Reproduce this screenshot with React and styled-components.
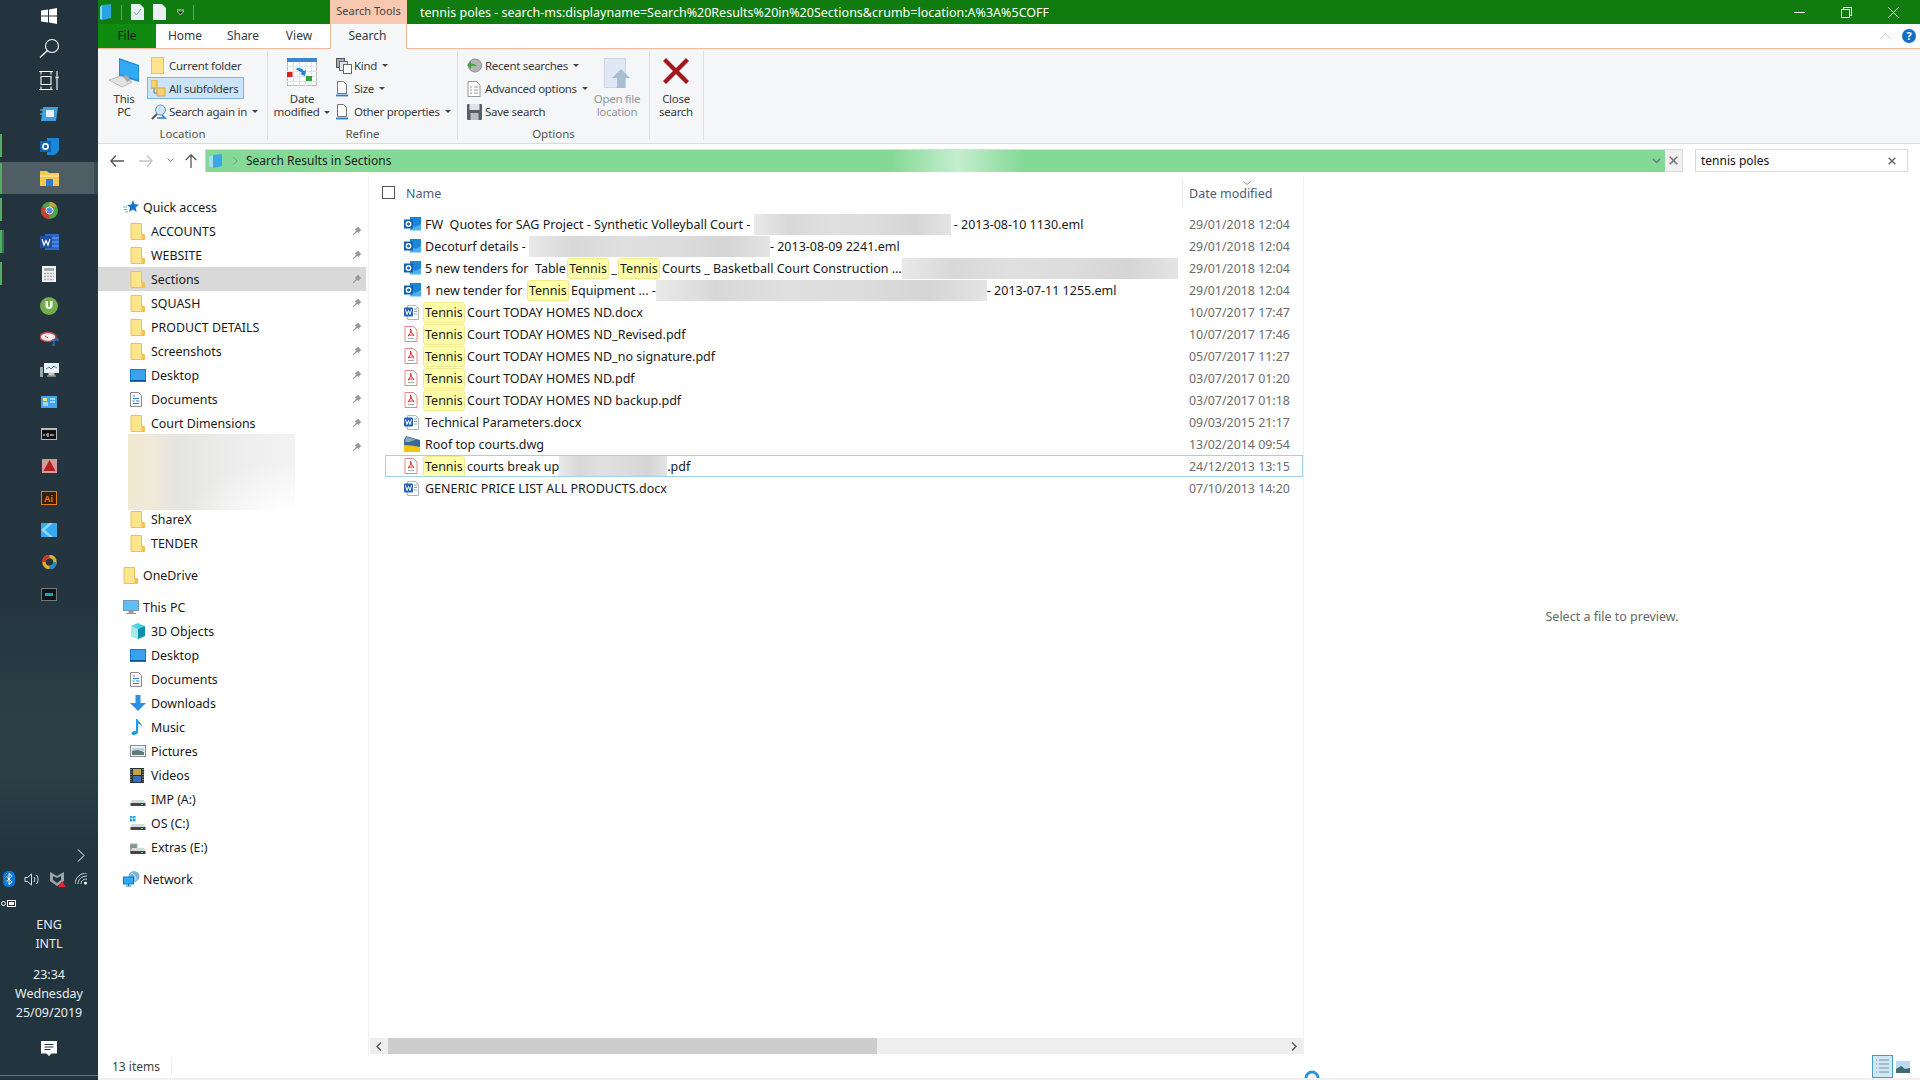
import React from "react";
import styled, { createGlobalStyle } from "styled-components";

const Global = createGlobalStyle`
  html, body { margin:0; padding:0; background:#fff; }
  body { font-family:"Noto Sans","Open Sans",sans-serif; font-size:12px; color:#1a1a1a; }
  * { box-sizing:border-box; }
  svg { display:block; flex:none; }
`;

/* ---------- small drawings ---------- */
const Folder = () => (
  <svg width="15" height="17" viewBox="0 0 15 17">
    <path d="M1 .5h10.5v11l3 .5v4.500H1z" fill="#fde58f" stroke="#ecc25c" />
    <path d="M11.500 11h3v5.500h-3z" fill="#f2c14e" />
  </svg>
);
const DesktopIcon = () => (
  <svg width="16" height="13" viewBox="0 0 16 13">
    <rect width="16" height="13" fill="#1479d6" />
    <path d="M1 1h14v10L1 11z" fill="#3aa0f0" />
    <path d="M0 11.500h16" stroke="#0a4f91" />
  </svg>
);
const DocsIcon = () => (
  <svg width="12" height="15" viewBox="0 0 12 15">
    <path d="M.5.5h8l3 3v11H.5z" fill="#fff" stroke="#8a8a8a" />
    <path d="M3 4h2M3 6.500h6M6 9h3.500M2.500 9h2M3 11.500h6" stroke="#2c7fd1" />
  </svg>
);
const Pin = () => (
  <svg width="10" height="10" viewBox="0 0 10 10">
    <path d="M5.800.6l3.600 3.600-1.200.6-1.500 2.300L5 6 1.200 9.400 0.600 8.800 4 5 2.900 3.300l2.300-1.500z" fill="#9a9a9a" />
  </svg>
);
const QuickStar = () => (
  <svg width="16" height="14" viewBox="0 0 16 14">
    <path d="M10 0l1.600 4.300 4.400.3-3.400 2.800 1.100 4.500L9.900 9.500 6 12l1.100-4.400L4 5l4.300-.4z" fill="#1872c9" />
    <path d="M0 7h4M1 9.500h3.500M2 12h3" stroke="#6aaee6" />
  </svg>
);
const PcIcon = () => (
  <svg width="16" height="15" viewBox="0 0 16 15">
    <rect x=".5" y=".5" width="15" height="10" fill="#5cc0f5" stroke="#7a99ad" />
    <path d="M6 11h4v2H6zM3 13.500h10" fill="#9ab" stroke="#8b9aa6" />
  </svg>
);
const CubeIcon = () => (
  <svg width="16" height="16" viewBox="0 0 16 16">
    <path d="M8 0l7 3v10l-7 3-7-3V3z" fill="#4ed3dc" />
    <path d="M8 6l7-3v10l-7 3z" fill="#0f8fb0" />
    <path d="M1 3l7 3v10l-7-3z" fill="#a6ebe9" />
  </svg>
);
const DownloadIcon = () => (
  <svg width="16" height="16" viewBox="0 0 16 16"><path d="M5.500 0h5v8H16l-8 8-8-8h5.500z" fill="#2f8fe0" /></svg>
);
const MusicIcon = () => (
  <svg width="13" height="16" viewBox="0 0 13 16"><path d="M6 0h1.500c.5 3 5 4 4.500 8-.6-2-2.500-3-3.800-3.300L8 13c0 2-2 3-4.500 3C1.500 16 1 14.500 2 13.300c1-1.200 3-1.500 4-1z" fill="#1e9be8" /></svg>
);
const PicturesIcon = () => (
  <svg width="16" height="12" viewBox="0 0 16 12">
    <rect x=".5" y=".5" width="15" height="11" fill="#eef3f6" stroke="#8a8f92" />
    <path d="M2 3h12v3H2z" fill="#bcd3e4" /><path d="M2 6l6-1 6 2v3H2z" fill="#5d7a78" />
  </svg>
);
const VideosIcon = () => (
  <svg width="14" height="15" viewBox="0 0 14 15">
    <rect width="14" height="15" fill="#2b2f38" />
    <rect x="3" y="1" width="8" height="6" fill="#c8a53c" /><rect x="3" y="8" width="8" height="6" fill="#3a6fb5" />
    <path d="M1 1v13M13 1v13" stroke="#ddd" strokeDasharray="1 1.500" />
  </svg>
);
const Drive = ({ kind }) => (
  <svg width="16" height="15" viewBox="0 0 16 15">
    {kind === "os" && <path d="M0 0h2.500v2.500H0zM3 0h2.500v2.500H3zM0 3h2.500v2.500H0zM3 3h2.500v2.500H3z" fill="#26a8e0" />}
    {kind === "ex" && <rect y="4" width="7" height="9" fill="#7d9a84" stroke="#aaa" />}
    <path d="M2 8h12l1.500 3h-15z" fill="#d8d8d8" />
    <rect x=".5" y="11" width="15" height="3" fill="#444" />
    <rect x="11" y="12" width="2" height="1" fill="#5fd35f" />
  </svg>
);
const NetworkIcon = () => (
  <svg width="17" height="16" viewBox="0 0 17 16">
    <circle cx="11" cy="5.500" r="5.500" fill="#7cb2de" /><path d="M8 2c3 1 5 3 5 8" stroke="#dfeefa" fill="none" />
    <rect x=".5" y="6" width="10" height="7" fill="#35a7ef" stroke="#1774b8" />
    <path d="M3 15h5M5.500 13v2" stroke="#1774b8" />
  </svg>
);

const OutlookSmall = () => (
  <svg width="17" height="15" viewBox="0 0 17 15">
    <path d="M6 0h11v7l-3 6H6z" fill="#1b86d6" />
    <path d="M6 7l5.500 3L17 7v6.500H6z" fill="#4fb0ea" />
    <rect x="0" y="2.500" width="9" height="9" fill="#0f62ad" />
    <circle cx="4.500" cy="7" r="2.200" fill="none" stroke="#fff" strokeWidth="1.400" />
  </svg>
);
const WordSmall = () => (
  <svg width="15" height="15" viewBox="0 0 15 15">
    <path d="M3.500.5h8l3 3v11h-11z" fill="#fff" stroke="#b5b5b5" />
    <path d="M10 4h3M10 6.500h3M10 9h3" stroke="#7fa8d6" />
    <rect y="2.500" width="9" height="9" rx="1" fill="#2d61b5" />
    <path d="M1.500 4.500l1.500 5 1.500-4 1.500 4 1.500-5" stroke="#fff" fill="none" />
  </svg>
);
const PdfSmall = () => (
  <svg width="14" height="16" viewBox="0 0 14 16">
    <path d="M1 .5h8.500l3.500 3.500v11.500H1z" fill="#fff" stroke="#e08a8a" />
    <path d="M6.500 3c1 2 0 4-2.500 7 2-1 4.500-1.500 6-.6C8.500 8.500 7 6 6.500 3z" fill="none" stroke="#d9252a" />
    <path d="M4 12.500h6" stroke="#aaa" />
  </svg>
);
const DwgSmall = () => (
  <svg width="16" height="16" viewBox="0 0 16 16">
    <path d="M2 0l14 4v8H0V4z" fill="#3b6a98" /><path d="M2 1L12 3.500 5 6H1z" fill="#93a7b8" />
    <path d="M0 9l7 .5 9 1.500v5H0z" fill="#f2c511" />
  </svg>
);

const RibbonFolder = () => (
  <svg width="13" height="17" viewBox="0 0 13 17"><rect x=".5" y=".5" width="12" height="16" fill="#fde48c" stroke="#e9c25e" /></svg>
);
const SubFolders = () => (
  <svg width="15" height="17" viewBox="0 0 15 17">
    <path d="M0 0h6v8H0z" fill="#f7d36f" stroke="#d7a93c" />
    <path d="M6 8h8v8H6z" fill="#f7d36f" stroke="#d7a93c" />
    <path d="M3 8v5h3" stroke="#777" fill="none" />
  </svg>
);
const SearchAgain = () => (
  <svg width="16" height="16" viewBox="0 0 16 16">
    <circle cx="9.500" cy="6" r="5" fill="#cfe6f8" stroke="#6f8ea6" />
    <path d="M6 10l-5 5" stroke="#555" strokeWidth="2" /><path d="M6 14h8l-3-3" stroke="#2a7fd0" fill="none" strokeWidth="1.500" />
  </svg>
);
const ThisPcBig = () => (
  <svg width="31" height="30" viewBox="0 0 31 30">
    <path d="M10 0l20 7v17L10 18z" fill="#1f8fdc" /><path d="M11 2l18 6v14L11 16z" fill="#31aaf2" />
    <path d="M0 22l12-4 11 6-10 5z" fill="#e3e3e3" stroke="#bbb" /><path d="M14 18l4-1 4 5-4 2z" fill="#a8a8a8" />
  </svg>
);
const DateBig = () => (
  <svg width="30" height="28" viewBox="0 0 30 28">
    <rect x=".5" y=".5" width="29" height="27" fill="#fff" stroke="#bbb" />
    <rect width="30" height="4" fill="#3a86d1" />
    <path d="M0 8.500h30M0 13.500h30M0 18.500h30M0 23.500h30M6.500 4v24M12.500 4v24M18.500 4v24M24.500 4v24" stroke="#d7e3ee" />
    <rect y="14" width="5.500" height="5" fill="#e02020" /><rect x="19" y="18" width="6" height="5" fill="#2aa63a" />
    <path d="M8 11c4-2 7-1 9 2l2-1-1 6-5-2 2-1c-2-2-4-3-7-4z" fill="#2a7fd0" />
  </svg>
);
const KindIcon = () => (
  <svg width="16" height="16" viewBox="0 0 16 16">
    <rect x=".5" y=".5" width="8" height="9" fill="#aaa" stroke="#555" />
    <rect x="3.500" y="3.500" width="8" height="9" fill="#d7e4f2" stroke="#667" />
    <rect x="7.500" y="6.500" width="8" height="9" fill="#fff" stroke="#666" />
  </svg>
);
const PageBar = () => (
  <svg width="12" height="16" viewBox="0 0 12 16">
    <path d="M1.500.5h6l3 3v9h-9z" fill="#fff" stroke="#777" />
    <path d="M0 14.500h12" stroke="#2a7fd0" strokeWidth="1.800" />
  </svg>
);
const RecentIcon = () => (
  <svg width="15" height="15" viewBox="0 0 15 15">
    <circle cx="8" cy="7.500" r="6.500" fill="#b5b5b5" stroke="#8a8a8a" />
    <path d="M0 7l4-4v2.500c3 0 5 1 6 3-2-1-4-1-6-.5V11z" fill="#43a047" />
  </svg>
);
const AdvancedIcon = () => (
  <svg width="14" height="16" viewBox="0 0 14 16">
    <path d="M1 .5h8.500l3.500 3.500v11.500H1z" fill="#fff" stroke="#999" />
    <path d="M3 6h2M3 9h2M3 12h2M7 6h4M7 9h4M7 12h4" stroke="#999" />
  </svg>
);
const SaveIcon = () => (
  <svg width="15" height="16" viewBox="0 0 15 16">
    <rect width="15" height="16" rx="1" fill="#5a5f66" />
    <rect x="2.500" y="0" width="10" height="6" fill="#dfe3e8" />
    <rect x="3.500" y="9" width="8" height="7" fill="#b9bdc2" />
  </svg>
);
const OpenLocation = () => (
  <svg width="27" height="31" viewBox="0 0 27 31">
    <rect x=".5" y=".5" width="21" height="29" fill="#dfe8f4" stroke="#cbd7e6" />
    <path d="M17 11l9 9h-5v10h-8V20H8z" fill="#a9bdd3" />
  </svg>
);
const CloseBig = () => (
  <svg width="26" height="26" viewBox="0 0 26 26">
    <path d="M3 0l10 10L23 0l3 3-10 10 10 10-3 3-10-10L3 26l-3-3 10-10L0 3z" fill="#a4161f" />
  </svg>
);

const Tri = styled.span`
  display:inline-block;
  width:0;
  height:0;
  margin-left:5px;
  border-left:3px solid transparent;
  border-right:3px solid transparent;
  border-top:3px solid #444;
  vertical-align:2px;
`;

/* ---------- data ---------- */
const M = { mark: true };
const files = [
  { icon: "ol", date: "29/01/2018 12:04", name: ["FW  Quotes for SAG Project - Synthetic Volleyball Court - ", { blur: 197 }, " - 2013-08-10 1130.eml"] },
  { icon: "ol", date: "29/01/2018 12:04", name: ["Decoturf details - ", { blur: 241 }, "- 2013-08-09 2241.eml"] },
  { icon: "ol", date: "29/01/2018 12:04", name: ["5 new tenders for  Table ", M, " _ ", M, " Courts _ Basketball Court Construction ...", { blur: 276 }] },
  { icon: "ol", date: "29/01/2018 12:04", name: ["1 new tender for  ", M, " Equipment ... -", { blur: 331 }, "- 2013-07-11 1255.eml"] },
  { icon: "w", date: "10/07/2017 17:47", name: [M, " Court TODAY HOMES ND.docx"] },
  { icon: "p", date: "10/07/2017 17:46", name: [M, " Court TODAY HOMES ND_Revised.pdf"] },
  { icon: "p", date: "05/07/2017 11:27", name: [M, " Court TODAY HOMES ND_no signature.pdf"] },
  { icon: "p", date: "03/07/2017 01:20", name: [M, " Court TODAY HOMES ND.pdf"] },
  { icon: "p", date: "03/07/2017 01:18", name: [M, " Court TODAY HOMES ND backup.pdf"] },
  { icon: "w", date: "09/03/2015 21:17", name: ["Technical Parameters.docx"] },
  { icon: "d", date: "13/02/2014 09:54", name: ["Roof top courts.dwg"] },
  { icon: "p", date: "24/12/2013 13:15", focus: true, name: [M, " courts break up", { blur: 108 }, ".pdf"] },
  { icon: "w", date: "07/10/2013 14:20", name: ["GENERIC PRICE LIST ALL PRODUCTS.docx"] },
];
const fileIcons = { ol: <OutlookSmall />, w: <WordSmall />, p: <PdfSmall />, d: <DwgSmall /> };

const quick = [
  ["ACCOUNTS", <Folder />], ["WEBSITE", <Folder />], ["Sections", <Folder />, true], ["SQUASH", <Folder />],
  ["PRODUCT DETAILS", <Folder />], ["Screenshots", <Folder />], ["Desktop", <DesktopIcon />],
  ["Documents", <DocsIcon />], ["Court Dimensions", <Folder />],
];
const pcItems = [
  ["3D Objects", <CubeIcon />], ["Desktop", <DesktopIcon />], ["Documents", <DocsIcon />], ["Downloads", <DownloadIcon />],
  ["Music", <MusicIcon />], ["Pictures", <PicturesIcon />], ["Videos", <VideosIcon />],
  ["IMP (A:)", <Drive />], ["OS (C:)", <Drive kind="os" />], ["Extras (E:)", <Drive kind="ex" />],
];

const taskIcons = [
  { el: <svg width="18" height="16" viewBox="0 0 18 16"><path d="M3 1h15l-2 14H1z" fill="#3f9fe0" /><rect x="6" y="4" width="8" height="7" fill="#e6f2fb" /><path d="M0 4h3M0 8h2" stroke="#7cc" /></svg> },
  { on: true, el: <svg width="19" height="17" viewBox="0 0 19 17"><path d="M7 0h12v13l-4 4H7z" fill="#1b86d6" /><rect y="3" width="11" height="11" fill="#0f62ad" /><circle cx="5.500" cy="8.500" r="2.600" fill="none" stroke="#fff" strokeWidth="1.600" /></svg> },
  { on: true, active: true, el: <svg width="19" height="16" viewBox="0 0 19 16"><path d="M0 1h7l2 2h10v13H0z" fill="#f5c94f" /><path d="M0 5h19v2H0z" fill="#fbe08a" /><rect x="6" y="9" width="7" height="7" fill="#2d7fc8" /></svg> },
  { on: true, el: <svg width="17" height="17" viewBox="0 0 17 17"><circle cx="8.500" cy="8.500" r="8.500" fill="#4da64d" /><path d="M8.500 0a8.500 8.500 0 0 1 7.500 4.500H8.500z" fill="#d9a12c" /><path d="M1.500 4a8.500 8.500 0 0 0 6 13l3-6z" fill="#c9412f" /><circle cx="8.500" cy="8.500" r="3.600" fill="#5a8fe0" stroke="#eee" /></svg> },
  { on: true, dbl: true, el: <svg width="19" height="16" viewBox="0 0 19 16"><rect x="5" width="14" height="16" fill="#2b69c8" /><path d="M11 4h8M11 8h8M11 12h8" stroke="#74a3e6" /><rect y="2" width="12" height="12" fill="#1b4ea0" /><path d="M2 5l2 6 2-4.500L8 11l2-6" stroke="#fff" strokeWidth="1.200" fill="none" /></svg> },
  { on: true, el: <svg width="14" height="16" viewBox="0 0 14 16"><rect width="14" height="16" fill="#f2f2f2" /><rect x="2" y="2" width="10" height="3" fill="#aaa" /><path d="M2 7.500h10M2 10.500h10M2 13.500h10" stroke="#aaa" strokeDasharray="2 1" strokeWidth="1.500" /></svg> },
  { el: <svg width="18" height="18" viewBox="0 0 18 18"><circle cx="9" cy="9" r="9" fill="#73ad4c" /><path d="M5.500 4v5c0 4 7 4 7 0V4h-2.500v5c0 1-2 1-2 0V4z" fill="#fff" /></svg> },
  { el: <svg width="19" height="15" viewBox="0 0 19 15"><ellipse cx="8" cy="6" rx="8" ry="4.500" fill="#eee" stroke="#c0444a" strokeWidth="1.500" /><path d="M5 5l3 2" stroke="#c0444a" /><path d="M12 9h6l-1-2M14 9v5h-2" stroke="#2a72b5" strokeWidth="1.500" fill="none" /></svg> },
  { el: <svg width="19" height="15" viewBox="0 0 19 15"><rect x="4" width="15" height="10" fill="#eef2f5" /><path d="M6 6l3-2 2 2 3-3 3 2" stroke="#3a86d1" fill="none" /><path d="M9 10h5v2H9zM7 13h9" stroke="#ccc" fill="#bbb" /><rect y="4" width="3" height="10" fill="#9aa" /></svg> },
  { el: <svg width="16" height="12" viewBox="0 0 16 12"><rect width="16" height="12" fill="#42a5e8" /><rect x="2" y="2" width="4" height="3" fill="#f2e08a" /><path d="M2 7h5M2 9h5M9 3h5M9 6h5" stroke="#fff" /></svg> },
  { el: <svg width="16" height="12" viewBox="0 0 16 12"><rect x=".5" y=".5" width="15" height="11" fill="#111" stroke="#bbb" /><rect y="0" width="16" height="2" fill="#bbb" /><path d="M2 7h2M5 7h1M7 5v4M9 7h4" stroke="#fff" /></svg> },
  { el: <svg width="15" height="14" viewBox="0 0 15 14"><rect width="15" height="14" fill="#d39a9a" /><path d="M7.500 1l6 11h-12z" fill="#b21f1f" /></svg> },
  { el: <svg width="16" height="14" viewBox="0 0 16 14"><rect x=".5" y=".5" width="15" height="13" fill="#3a2000" stroke="#e87f16" /><text x="3" y="11" fontSize="9" fontFamily="Liberation Sans" fontWeight="700" fill="#e87f16">Ai</text></svg> },
  { el: <svg width="16" height="14" viewBox="0 0 16 14"><rect width="16" height="14" fill="#37a9ef" /><path d="M0 7l8-7h4L4 7l8 7H8z" fill="#8ad4fa" /></svg> },
  { el: <svg width="15" height="14" viewBox="0 0 15 14"><circle cx="7.500" cy="7" r="5.500" fill="none" stroke="#ddb22b" strokeWidth="3.500" /><path d="M2 7a5.500 5.500 0 0 1 5.500-5.500" stroke="#d93025" fill="none" strokeWidth="3.500" /><path d="M13 7a5.500 5.500 0 0 1-5.500 5.500" stroke="#1a8ad3" fill="none" strokeWidth="3.500" /></svg> },
  { el: <svg width="16" height="13" viewBox="0 0 16 13"><rect x=".5" y=".5" width="15" height="12" fill="#0d1418" stroke="#777" /><rect x="4" y="5" width="8" height="3" fill="#1aa3b8" /></svg> },
];

/* ---------- main ---------- */
export default function App() {
  return (
    <Screen>
      <Global />
      <Taskbar>
        <SystemGroup>
          <TaskItem>
            <svg width="16" height="16" viewBox="0 0 16 16"><path d="M0 2.500L7 1.500v6H0zM8 1.400L16 0v7.500H8zM0 8.500h7v6l-7-1zM8 8.500h8V16l-8-1.400z" fill="#fff" /></svg>
          </TaskItem>
          <TaskItem>
            <svg width="21" height="20" viewBox="0 0 21 20"><circle cx="13" cy="8" r="6.500" fill="none" stroke="#fff" strokeWidth="1.100" /><path d="M8.500 12.500L1 19.500" stroke="#fff" strokeWidth="1.300" /></svg>
          </TaskItem>
          <TaskItem>
            <svg width="20" height="19" viewBox="0 0 20 19" stroke="#fff" strokeWidth="1.100" fill="none"><path d="M0 .5h14M2 .5v3M12 .5v3M2 5.500h10v8H2zM0 18.500h14M2 15.500v3M12 15.500v3M18 0v5M18 8v11" /><rect x="16.500" y="5.500" width="3" height="2" fill="#fff" stroke="none" /></svg>
          </TaskItem>
        </SystemGroup>
        {taskIcons.map((t, i) => (
          <TaskItem key={i} $on={t.on} $active={t.active} $dbl={t.dbl}>{t.el}</TaskItem>
        ))}
        <Tray>
          <TrayRow $end>
            <svg width="8" height="13" viewBox="0 0 8 13"><path d="M1 .5l6 6-6 6" stroke="#fff" fill="none" /></svg>
          </TrayRow>
          <TrayRow>
            <svg width="12" height="16" viewBox="0 0 12 16"><rect width="12" height="16" rx="5" fill="#0a78d6" /><path d="M3 5l6 6-3 2.500v-11l3 2.500-6 6" stroke="#fff" fill="none" /></svg>
            <svg width="17" height="13" viewBox="0 0 17 13" fill="none" stroke="#dfe3e6"><path d="M1 4.500h2.500l4-3.500v11l-4-3.500H1zM10 4c1 1.500 1 3.500 0 5M12.500 2c2 2.500 2 6.500 0 9" /></svg>
            <svg width="16" height="15" viewBox="0 0 16 15"><path d="M0 0l7 4 7-4v9l-7 5-7-5z" fill="#9aa6ac" /><path d="M3 4l4 2 4-2v4l-4 3-4-3z" fill="#22343e" /><path d="M12 9l4 6H8z" fill="#e0262c" /></svg>
            <svg width="13" height="12" viewBox="0 0 13 12" fill="none" stroke="#cfd5d8"><path d="M0 11C0 5 5 0 12 0M3 11c0-4 3-8 9-8M6 11c0-3 2-5 6-5" /><circle cx="10.500" cy="10" r="1.500" fill="#fff" stroke="none" /></svg>
          </TrayRow>
          <TrayRow $tight>
            <svg width="16" height="9" viewBox="0 0 16 9"><rect x="6.500" y="1.500" width="8" height="6" fill="none" stroke="#fff" /><rect x="8" y="3" width="5" height="3" fill="#fff" /><circle cx="2.500" cy="4.500" r="2" fill="none" stroke="#fff" /></svg>
          </TrayRow>
          <TrayText>ENG<br />INTL</TrayText>
          <Clock>23:34<br />Wednesday<br />25/09/2019</Clock>
          <Notify>
            <svg width="16" height="16" viewBox="0 0 16 16"><path d="M0 0h16v12.500h-5.500L8 15l-2.500-2.500H0z" fill="#fff" /><path d="M3.500 3.500h9M3.500 6h9M3.500 8.500h6" stroke="#22343e" /></svg>
          </Notify>
        </Tray>
      </Taskbar>

      <Window>
        <TitleBar>
          <Qat>
            <svg width="12" height="16" viewBox="0 0 12 16"><path d="M2 1l9-1v14l-9 2z" fill="#2aa4e0" /><path d="M0 3l2-2v15l-2-1z" fill="#86d7f2" /></svg>
            <QatSep />
            <svg width="13" height="16" viewBox="0 0 13 16"><path d="M0 0h9l4 4v12H0z" fill="#e6eef2" /><path d="M3 8l2.500 3L10 5" stroke="#8aa" fill="none" /></svg>
            <QatGap />
            <svg width="13" height="16" viewBox="0 0 13 16"><path d="M0 0h9l4 4v12H0z" fill="#e9f0f4" /></svg>
            <QatGap $small />
            <svg width="7" height="6" viewBox="0 0 7 6"><path d="M0 0h7M0 2l3.500 4L7 2z" stroke="#fff" strokeWidth=".7" fill="#111" /></svg>
            <QatSep />
          </Qat>
          <ToolsTab>Search Tools</ToolsTab>
          <TitleText>tennis poles - search-ms:displayname=Search%20Results%20in%20Sections&amp;crumb=location:A%3A%5COFF</TitleText>
          <Controls>
            <WinBtn><svg width="11" height="11" viewBox="0 0 11 11"><path d="M0 5.500h11" stroke="#fff" /></svg></WinBtn>
            <WinBtn><svg width="11" height="11" viewBox="0 0 11 11" fill="none" stroke="#fff"><path d="M.5 2.500h8v8h-8zM2.500 2.500v-2h8v8h-2" /></svg></WinBtn>
            <WinBtn><svg width="11" height="11" viewBox="0 0 11 11"><path d="M.5.500l10 10M10.500.500l-10 10" stroke="#fff" /></svg></WinBtn>
          </Controls>
        </TitleBar>

        <TabRow>
          <FileTab>File</FileTab>
          <Tab>Home</Tab>
          <Tab>Share</Tab>
          <Tab $w={54}>View</Tab>
          <SearchTab>Search</SearchTab>
          <TabExtras>
            <svg width="11" height="6" viewBox="0 0 11 6"><path d="M.5 5.500l5-5 5 5" stroke="#c9c9c9" fill="none" /></svg>
            <HelpDot>?</HelpDot>
          </TabExtras>
        </TabRow>

        <Ribbon>
          <Group $w={170}>
            <GroupBody $pad={6}>
              <BigButton $w={40}><BigIcon><ThisPcBig /></BigIcon>This<br />PC</BigButton>
              <SmallCol $ml={3}>
                <SmallBtn><SmallIcon><RibbonFolder /></SmallIcon>Current folder</SmallBtn>
                <SmallBtn $on><SmallIcon><SubFolders /></SmallIcon>All subfolders</SmallBtn>
                <SmallBtn><SmallIcon><SearchAgain /></SmallIcon>Search again in<Tri /></SmallBtn>
              </SmallCol>
            </GroupBody>
            <GroupLabel>Location</GroupLabel>
          </Group>
          <Group $w={190}>
            <GroupBody $pad={4}>
              <BigButton $w={60}><BigIcon><DateBig /></BigIcon>Date<br /><span>modified<Tri /></span></BigButton>
              <SmallCol $ml={0}>
                <SmallBtn><SmallIcon><KindIcon /></SmallIcon>Kind<Tri /></SmallBtn>
                <SmallBtn><SmallIcon><PageBar /></SmallIcon>Size<Tri /></SmallBtn>
                <SmallBtn><SmallIcon><PageBar /></SmallIcon>Other properties<Tri /></SmallBtn>
              </SmallCol>
            </GroupBody>
            <GroupLabel>Refine</GroupLabel>
          </Group>
          <Group $w={192}>
            <GroupBody $pad={5}>
              <SmallCol $ml={0} $w={128}>
                <SmallBtn><SmallIcon><RecentIcon /></SmallIcon>Recent searches<Tri /></SmallBtn>
                <SmallBtn><SmallIcon><AdvancedIcon /></SmallIcon>Advanced options<Tri /></SmallBtn>
                <SmallBtn><SmallIcon><SaveIcon /></SmallIcon>Save search</SmallBtn>
              </SmallCol>
              <BigButton $w={52} $dim><BigIcon><OpenLocation /></BigIcon>Open file<br />location</BigButton>
            </GroupBody>
            <GroupLabel>Options</GroupLabel>
          </Group>
          <Group $w={54}>
            <GroupBody $pad={1}>
              <BigButton $w={50}><BigIcon><CloseBig /></BigIcon>Close<br />search</BigButton>
            </GroupBody>
            <GroupLabel>&nbsp;</GroupLabel>
          </Group>
        </Ribbon>

        <NavBar>
          <NavBtn $w={28}><svg width="14" height="12" viewBox="0 0 14 12"><path d="M6 .5L.8 6 6 11.500M1 6h13" stroke="#555" strokeWidth="1.300" fill="none" /></svg></NavBtn>
          <NavBtn $w={29}><svg width="14" height="12" viewBox="0 0 14 12"><path d="M8 .5L13.200 6 8 11.500M13 6H0" stroke="#c4c4c4" strokeWidth="1.300" fill="none" /></svg></NavBtn>
          <NavBtn $w={20}><svg width="7" height="5" viewBox="0 0 7 5"><path d="M.5.500l3 3 3-3" stroke="#777" fill="none" /></svg></NavBtn>
          <NavBtn $w={22}><svg width="12" height="14" viewBox="0 0 12 14"><path d="M.8 6L6 .8 11.200 6M6 1v13" stroke="#555" strokeWidth="1.300" fill="none" /></svg></NavBtn>
          <Address>
            <svg width="15" height="14" viewBox="0 0 15 14"><path d="M4 1l9-1v12l-9 2z" fill="#3aa7e8" /><path d="M0 2.500L4 1v13l-4-1.500z" fill="#a5dcf5" /></svg>
            <AddrArrow><svg width="5" height="8" viewBox="0 0 5 8"><path d="M.8.500l3.500 3.500L.8 7.500" stroke="#6f8f75" fill="none" /></svg></AddrArrow>
            <AddrText>Search Results in Sections</AddrText>
            <AddrDrop><svg width="9" height="6" viewBox="0 0 9 6"><path d="M.8.800L4.500 4.500 8.200.8" stroke="#678" strokeWidth="1.400" fill="none" /></svg></AddrDrop>
          </Address>
          <StopBtn><svg width="9" height="9" viewBox="0 0 9 9"><path d="M.7.700l7.600 7.600M8.300.7L.7 8.300" stroke="#777" strokeWidth="1.600" /></svg></StopBtn>
          <SearchBox>
            <span>tennis poles</span>
            <svg width="8" height="8" viewBox="0 0 8 8"><path d="M.7.700l6.600 6.600M7.300.7L.7 7.300" stroke="#666" strokeWidth="1.500" /></svg>
          </SearchBox>
        </NavBar>

        <Body>
          <Sidebar>
            <NavRow $top><NavIcon $top><QuickStar /></NavIcon>Quick access</NavRow>
            {quick.map(([label, icon, selected]) => (
              <NavRow key={label} $sel={selected}>
                <NavIcon>{icon}</NavIcon>{label}
                <PinSlot><Pin /></PinSlot>
              </NavRow>
            ))}
            <BlurRow>
              <BlurNav />
              <PinSlot $top><Pin /></PinSlot>
            </BlurRow>
            <NavRow><NavIcon><Folder /></NavIcon>ShareX</NavRow>
            <NavRow><NavIcon><Folder /></NavIcon>TENDER</NavRow>
            <NavRow $top $gap><NavIcon $top><Folder /></NavIcon>OneDrive</NavRow>
            <NavRow $top $gap><NavIcon $top><PcIcon /></NavIcon>This PC</NavRow>
            {pcItems.map(([label, icon]) => (
              <NavRow key={label}><NavIcon>{icon}</NavIcon>{label}</NavRow>
            ))}
            <NavRow $top $gap><NavIcon $top><NetworkIcon /></NavIcon>Network</NavRow>
          </Sidebar>

          <ListPane>
            <ListHead>
              <Check />
              <NameHead>Name</NameHead>
              <DateHead>
                <SortMark><svg width="8" height="4" viewBox="0 0 8 4"><path d="M.5.500L4 3.500 7.500.5" stroke="#8a8a8a" fill="none" /></svg></SortMark>
                Date modified
              </DateHead>
            </ListHead>
            <Rows>
              {files.map((f) => (
                <FileRow key={f.date + f.name.length} $focus={f.focus}>
                  <FileName>
                    <FileIcon>{fileIcons[f.icon]}</FileIcon>
                    {f.name.map((part, i) => {
                      if (part.mark) return <Mark key={i}>Tennis</Mark>;
                      if (part.blur) return <Blurred key={i} $w={part.blur} />;
                      return <span key={i}>{part}</span>;
                    })}
                  </FileName>
                  <FileDate>{f.date}</FileDate>
                </FileRow>
              ))}
            </Rows>
            <HScroll>
              <ScrollEnd><svg width="6" height="9" viewBox="0 0 6 9"><path d="M5 .5l-4 4 4 4" stroke="#555" strokeWidth="1.400" fill="none" /></svg></ScrollEnd>
              <Thumb />
              <ScrollEnd $right><svg width="6" height="9" viewBox="0 0 6 9"><path d="M1 .5l4 4-4 4" stroke="#555" strokeWidth="1.400" fill="none" /></svg></ScrollEnd>
            </HScroll>
          </ListPane>

          <Preview>Select a file to preview.</Preview>
        </Body>

        <StatusBar>
          <ItemCount>13 items</ItemCount>
          <Spinner>
            <svg width="16" height="8" viewBox="0 0 16 8"><path d="M2 8a6 6 0 0 1 12 0" stroke="#2b98e6" strokeWidth="3" fill="none" /></svg>
          </Spinner>
          <ViewButtons>
            <ViewBtn $on>
              <svg width="15" height="19" viewBox="0 0 15 19"><path d="M1 3h1M1 7h1M1 11h1M1 15h1M4 3h10M4 7h10M4 11h10M4 15h10" stroke="#7a8f9e" /></svg>
            </ViewBtn>
            <ViewBtn>
              <svg width="14" height="12" viewBox="0 0 14 12"><rect width="14" height="12" fill="#bcd8f2" /><path d="M0 8l5-3 4 3 5-1v5H0z" fill="#3f6a70" /></svg>
            </ViewBtn>
          </ViewButtons>
        </StatusBar>
      </Window>
    </Screen>
  );
}

/* ---------- styles ---------- */
const Screen = styled.div`
  display:flex;
  width:1920px;
  height:1080px;
  overflow:hidden;
`;

const Taskbar = styled.aside`
  width:98px;
  flex:none;
  display:flex;
  flex-direction:column;
  color:#e8ecee;
  background:linear-gradient(180deg,#23343e 0,#24353f 56%,#2a3f46 66%,#2a3f46 72%,#22343e 80%,#22343e 100%);
`;
const SystemGroup = styled.div`
  margin-bottom:2px;
`;
const TaskItem = styled.div`
  position:relative;
  height:32px;
  display:flex;
  align-items:center;
  justify-content:center;
  background:${(p) => (p.$active ? "linear-gradient(90deg,#4e5e64 0 94px,#3a4a51 94px)" : "none")};
  &::before {
    content:"";
    display:${(p) => (p.$on ? "block" : "none")};
    position:absolute;
    left:0;
    top:${(p) => (p.$active ? "1px" : "4px")};
    bottom:${(p) => (p.$active ? "0" : "5px")};
    width:2px;
    background:#4fae5f;
    box-shadow:${(p) => (p.$dbl ? "2px 0 0 #2f7a45" : "none")};
  }
`;
const Tray = styled.div`
  margin-top:auto;
  display:flex;
  flex-direction:column;
  border-bottom:1px solid #64737a;
  margin-bottom:4px;
  padding-bottom:14px;
`;
const TrayRow = styled.div`
  height:24px;
  display:flex;
  align-items:center;
  justify-content:${(p) => (p.$end ? "flex-end" : p.$tight ? "flex-start" : "space-between")};
  padding:${(p) => (p.$end ? "0 13px 0 0" : p.$tight ? "0 0 0 1px" : "0 10px 0 3px")};
`;
const TrayText = styled.div`
  text-align:center;
  font-size:12.500px;
  line-height:19px;
`;
const Clock = styled(TrayText)`
  margin-top:12px;
`;
const Notify = styled.div`
  margin-top:15px;
  height:24px;
  display:flex;
  align-items:center;
  justify-content:center;
`;

const Window = styled.main`
  flex:1;
  min-width:0;
  display:flex;
  flex-direction:column;
`;
const TitleBar = styled.header`
  height:24px;
  flex:none;
  display:flex;
  align-items:center;
  background:#107c10;
  color:#fff;
`;
const Qat = styled.div`
  width:232px;
  display:flex;
  align-items:center;
  padding-left:2px;
`;
const QatSep = styled.i`
  width:1px;
  height:15px;
  margin:0 9px;
  background:#5da85d;
`;
const QatGap = styled.i`
  width:${(p) => (p.$small ? "11px" : "9px")};
`;
const ToolsTab = styled.div`
  width:77px;
  height:24px;
  line-height:21px;
  text-align:center;
  font-size:11px;
  color:#444;
  background:#f8c9b0;
`;
const TitleText = styled.div`
  margin-left:13px;
  font-size:12.500px;
  white-space:nowrap;
`;
const Controls = styled.div`
  margin-left:auto;
  padding-right:3px;
  display:flex;
`;
const WinBtn = styled.div`
  width:47px;
  height:24px;
  display:flex;
  align-items:center;
  justify-content:center;
`;

const TabRow = styled.nav`
  height:25px;
  flex:none;
  display:flex;
  background:#fff;
  border-bottom:1px solid #f3b79a;
`;
const Tab = styled.div`
  width:${(p) => p.$w || 58}px;
  height:24px;
  line-height:24px;
  text-align:center;
  color:#3a3a3a;
`;
const FileTab = styled(Tab)`
  background:#108a10;
  color:#1d1d1d;
`;
const SearchTab = styled(Tab)`
  width:77px;
  height:25px;
  margin-left:4px;
  padding-right:2px;
  background:#f6f7f8;
  border:1px solid #f3b79a;
  border-width:0 1px;
`;
const TabExtras = styled.div`
  margin-left:auto;
  padding-right:4px;
  display:flex;
  align-items:center;
  gap:11px;
`;
const HelpDot = styled.div`
  width:14px;
  height:14px;
  border-radius:50%;
  background:#0f6fc6;
  color:#fff;
  font-size:11px;
  font-weight:700;
  line-height:14px;
  text-align:center;
`;

const Ribbon = styled.section`
  height:95px;
  flex:none;
  display:flex;
  padding:2px 0 3px;
  background:#f5f6f7;
  border-bottom:1px solid #dadbdc;
  color:#3b3b3b;
`;
const Group = styled.div`
  width:${(p) => p.$w}px;
  display:flex;
  flex-direction:column;
  border-right:1px solid #dfe0e1;
`;
const GroupBody = styled.div`
  flex:1;
  display:flex;
  align-items:flex-start;
  padding:3px 0 0 ${(p) => p.$pad}px;
  font-size:11.500px;
  letter-spacing:-.3px;
`;
const GroupLabel = styled.div`
  height:12px;
  line-height:12px;
  text-align:center;
  color:#555;
  font-size:11.500px;
`;
const BigButton = styled.div`
  width:${(p) => p.$w}px;
  flex:none;
  text-align:center;
  line-height:13px;
  color:${(p) => (p.$dim ? "#8f99a2" : "#3b3b3b")};
  white-space:nowrap;
`;
const BigIcon = styled.div`
  height:38px;
  padding-top:4px;
  display:flex;
  justify-content:center;
`;
const SmallCol = styled.div`
  margin-left:${(p) => p.$ml}px;
  width:${(p) => (p.$w ? `${p.$w}px` : "auto")};
  flex:none;
  display:flex;
  flex-direction:column;
`;
const SmallBtn = styled.div`
  height:${(p) => (p.$on ? "22px" : "23px")};
  margin-bottom:${(p) => (p.$on ? "1px" : "0")};
  width:${(p) => (p.$on ? "97px" : "auto")};
  display:flex;
  align-items:center;
  padding-left:4px;
  white-space:nowrap;
  background:${(p) => (p.$on ? "#cce4f7" : "none")};
  outline:${(p) => (p.$on ? "1px solid #7fb2e5" : "none")};
  outline-offset:-1px;
`;
const SmallIcon = styled.div`
  width:18px;
  flex:none;
  display:flex;
  justify-content:flex-start;
`;

const NavBar = styled.div`
  height:33px;
  flex:none;
  display:flex;
  align-items:flex-start;
  padding:5px 12px 0 5px;
`;
const NavBtn = styled.div`
  width:${(p) => p.$w}px;
  height:23px;
  display:flex;
  align-items:center;
  justify-content:center;
`;
const Address = styled.div`
  flex:1;
  height:23px;
  margin-left:3px;
  display:flex;
  align-items:center;
  padding:0 0 1px 3px;
  color:#1c1c1c;
  background:linear-gradient(90deg,#85d996 0 47%,#c4eecf 51.500%,#85d996 56%,#85d996 100%);
  border-left:1px solid #cfd8d0;
  border-top:1px solid #c9e8cf;
`;
const AddrArrow = styled.div`
  width:22px;
  display:flex;
  justify-content:center;
`;
const AddrText = styled.div`
  flex:1;
`;
const AddrDrop = styled.div`
  width:18px;
  display:flex;
  justify-content:center;
`;
const StopBtn = styled.div`
  width:18px;
  height:23px;
  display:flex;
  align-items:center;
  justify-content:center;
  background:#f0f0f0;
  border:1px solid #d9d9d9;
  border-left:none;
`;
const SearchBox = styled.div`
  width:213px;
  height:23px;
  margin-left:12px;
  display:flex;
  align-items:center;
  justify-content:space-between;
  padding:0 11px 0 5px;
  border:1px solid #d9d9d9;
  span { color:#111; }
`;

const Body = styled.div`
  flex:1;
  min-height:0;
  display:flex;
`;
const Sidebar = styled.div`
  width:271px;
  flex:none;
  padding-top:18px;
  border-right:1px solid #f1f1f1;
`;
const NavRow = styled.div`
  position:relative;
  width:268px;
  height:24px;
  margin-top:${(p) => (p.$gap ? "8px" : "0")};
  display:flex;
  align-items:center;
  padding-left:${(p) => (p.$top ? "25px" : "32px")};
  font-size:12.400px;
  background:${(p) => (p.$sel ? "#d9d9d9" : "none")};
  color:#1a1a1a;
  white-space:nowrap;
`;
const NavIcon = styled.div`
  width:${(p) => (p.$top ? "20px" : "21px")};
  display:flex;
`;
const PinSlot = styled.div`
  margin-left:auto;
  padding-right:4px;
  align-self:${(p) => (p.$top ? "flex-start" : "center")};
  margin-top:${(p) => (p.$top ? "7px" : "0")};
`;
const BlurRow = styled.div`
  width:268px;
  height:72px;
  display:flex;
  padding-left:30px;
`;
const BlurNav = styled.div`
  width:167px;
  height:76px;
  margin-top:-1px;
  background:
    radial-gradient(ellipse at 100% 100%,#fff 0,rgba(255,255,255,0) 45%),
    linear-gradient(90deg,#f1e8cf 0,#efe9d8 14%,#e4e4e2 30%,#ececec 60%,#f3f3f3 100%);
`;

const ListPane = styled.div`
  width:935px;
  flex:none;
  display:flex;
  flex-direction:column;
  border-right:1px solid #f1f1f1;
`;
const ListHead = styled.div`
  position:relative;
  height:36px;
  flex:none;
  display:flex;
  align-items:flex-start;
  padding:3px 0 0 13px;
`;
const Check = styled.div`
  width:13px;
  height:13px;
  margin-top:6px;
  border:1.500px solid #555;
`;
const NameHead = styled.div`
  width:776px;
  margin-left:11px;
  line-height:27px;
  color:#4c607a;
  font-size:12.500px;
`;
const DateHead = styled.div`
  position:relative;
  height:27px;
  line-height:27px;
  padding-left:6px;
  border-left:1px solid #e5e5e5;
  color:#4c607a;
  font-size:12.500px;
`;
const SortMark = styled.div`
  position:absolute;
  left:60px;
  top:1px;
`;
const Rows = styled.div`
  flex:1;
  min-height:0;
`;
const FileRow = styled.div`
  width:918px;
  height:22px;
  margin-left:16px;
  display:grid;
  grid-template-columns:797px 1fr;
  align-items:center;
  outline:${(p) => (p.$focus ? "1px solid #a6cfe6" : "none")};
  outline-offset:-1px;
`;
const FileName = styled.div`
  display:flex;
  align-items:center;
  padding-left:19px;
  height:22px;
  font-size:12.500px;
  color:#1a1a1a;
  white-space:pre;
  overflow:hidden;
`;
const FileIcon = styled.div`
  width:21px;
  flex:none;
  display:flex;
`;
const FileDate = styled.div`
  padding-left:7px;
  color:#6d6d6d;
  font-size:12.400px;
  white-space:nowrap;
`;
const Mark = styled.span`
  height:21px;
  line-height:19px;
  margin:0 -1px 0 -2px;
  padding:0 1px;
  background:#ffffa8;
  border:1px solid #f3e78f;
  border-radius:3px;
`;
const Blurred = styled.i`
  display:inline-block;
  flex:none;
  width:${(p) => p.$w}px;
  height:21px;
  background:linear-gradient(90deg,#e9e9e9 0,#d8d8d8 18%,#e0e0e0 40%,#dcdcdc 62%,#d5d5d5 82%,#e4e4e4 100%);
`;
const HScroll = styled.div`
  height:16px;
  flex:none;
  margin:0 0 1px 1px;
  display:flex;
  background:#eee;
`;
const ScrollEnd = styled.div`
  width:18px;
  display:flex;
  align-items:center;
  justify-content:center;
  margin-left:${(p) => (p.$right ? "auto" : "0")};
`;
const Thumb = styled.div`
  width:489px;
  background:#cdcdcd;
`;
const Preview = styled.div`
  flex:1;
  display:flex;
  align-items:center;
  justify-content:center;
  color:#666;
  font-size:12.500px;
  padding-top:1px;
`;

const StatusBar = styled.footer`
  position:relative;
  height:25px;
  flex:none;
  display:flex;
  align-items:center;
  padding:0 9px 0 14px;
  border-bottom:2px solid #f0f0f0;
  color:#444;
`;
const ItemCount = styled.div`
  padding-right:11px;
  border-right:1px solid #eee;
`;
const Spinner = styled.div`
  position:absolute;
  left:1206px;
  top:15px;
`;
const ViewButtons = styled.div`
  margin-left:auto;
  display:flex;
  align-items:center;
  gap:2px;
`;
const ViewBtn = styled.div`
  width:${(p) => (p.$on ? "21px" : "16px")};
  height:${(p) => (p.$on ? "23px" : "12px")};
  display:flex;
  align-items:center;
  justify-content:center;
  background:${(p) => (p.$on ? "#cfe8f5" : "none")};
  outline:${(p) => (p.$on ? "1px solid #4a9cc0" : "none")};
  outline-offset:-1px;
`;
